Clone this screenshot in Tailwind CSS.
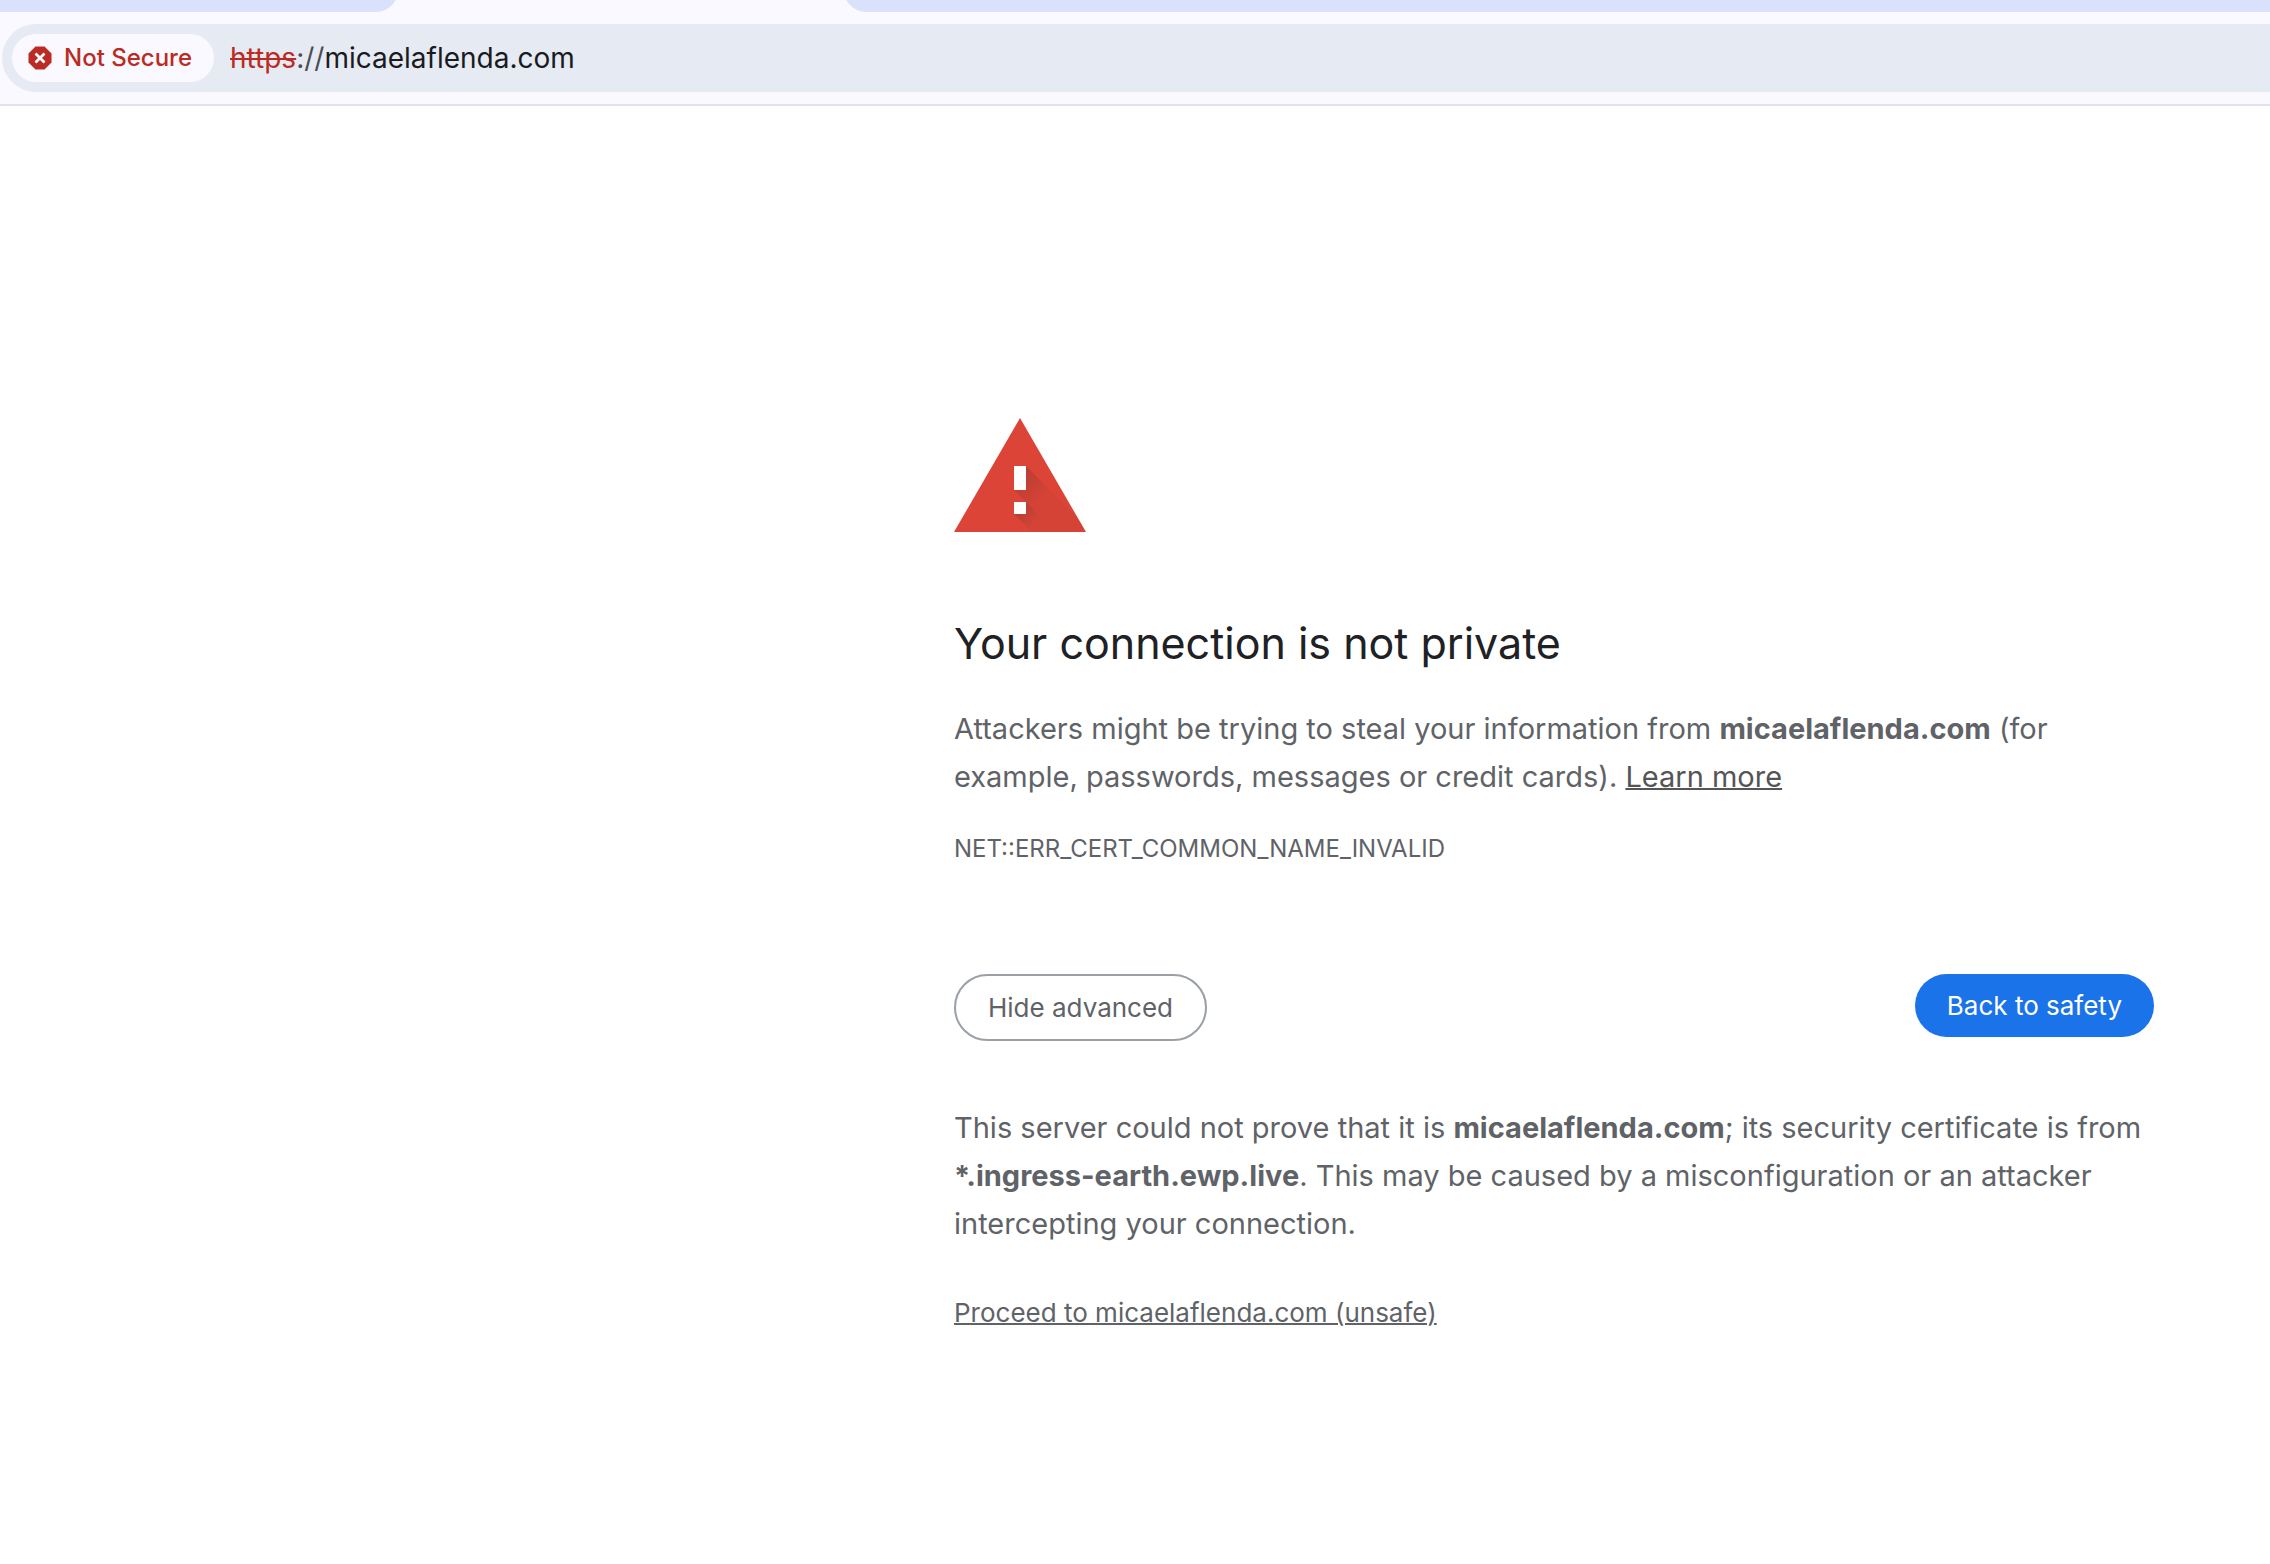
<!DOCTYPE html>
<html lang="en">
<head>
    <meta charset="UTF-8" />
    <meta name="viewport" content="width=device-width, initial-scale=1.0">
    <title>Privacy error</title>
    <script src="https://cdn.jsdelivr.net/npm/@tailwindcss/browser@4"></script>
</head>
<body class="bg-white text-[#5f6368] font-['Inter','Liberation_Sans',sans-serif]">
    <header class="bg-[#faf9ff] border-b-2 border-[#e3e2ec]">
        <!-- Tab strip -->
        <div class="flex h-3 items-end justify-between overflow-hidden">
            <div class="h-6 w-[398px] shrink-0 rounded-br-[22px] bg-[#dae1fb]"></div>
            <div class="ml-[446px] h-6 flex-1 rounded-bl-[22px] bg-[#dae1fb]"></div>
        </div>
        <!-- Address bar -->
        <div class="py-3 pl-[2px]">
            <div class="flex h-[68px] items-center rounded-l-full bg-[#e6eaf3] pl-[10px]">
                <button type="button" class="flex h-12 items-center gap-3 rounded-full bg-[#faf9ff] pl-4 pr-[22px] text-2xl font-medium text-[#b92b23]">
                    <svg class="h-6 w-6" viewBox="0 0 24 24" fill="none">
                        <path d="M7.5 0.5h9l7 7v9l-7 7h-9l-7-7v-9z" fill="currentColor"></path>
                        <path d="M7.5 7.5l9 9M16.500 7.500l-9 9" stroke="#faf9ff" stroke-width="2.800"></path>
                    </svg>
                    <span>Not Secure</span>
                </button>
                <a href="https://micaelaflenda.com" class="ml-4 text-[28px] text-[#1a1b21]"><span class="text-[#b92b23] line-through">https</span><span class="text-[#4a4c55]">://</span>micaelaflenda.com</a>
            </div>
        </div>
    </header>

    <main class="ml-auto mr-[116px] max-w-[1200px] pt-[312px]">
        <svg class="h-[114px] w-[132px]" viewBox="0 0 132 114" role="img" aria-label="Warning">
            <defs>
                <linearGradient id="bar-shadow" gradientUnits="userSpaceOnUse" x1="63" y1="63" x2="84" y2="84">
                    <stop offset="0" stop-color="#3e2723" stop-opacity="0.2"></stop>
                    <stop offset="1" stop-color="#3e2723" stop-opacity="0.04"></stop>
                </linearGradient>
                <linearGradient id="dot-shadow" gradientUnits="userSpaceOnUse" x1="72" y1="88" x2="85" y2="101">
                    <stop offset="0" stop-color="#3e2723" stop-opacity="0.2"></stop>
                    <stop offset="1" stop-color="#3e2723" stop-opacity="0.04"></stop>
                </linearGradient>
            </defs>
            <path d="M66 0l66 114H0z" fill="#db4437"></path>
            <path d="M72 48l51.7 51.7L132 114h-30L60 72h12z" fill="url(#bar-shadow)"></path>
            <path d="M72 84l30 30H78L60 96h12z" fill="url(#dot-shadow)"></path>
            <path d="M60 48h12v24H60zM60 84h12v12H60z" fill="#fff"></path>
        </svg>

        <h1 class="mt-[83px] text-[43px] leading-[56px] text-[#202124]">Your connection is not private</h1>
        <p class="mt-[34px] text-[29px] leading-[48px]">
            Attackers might be trying to steal your information from <strong class="font-bold">micaelaflenda.com</strong> (for example, passwords, messages or credit cards). <a href="#" class="text-[#555] underline decoration-2">Learn more</a>
        </p>
        <div class="mt-[30px] text-2xl leading-9">NET::ERR_CERT_COMMON_NAME_INVALID</div>

        <div class="mt-[107px] flex items-start justify-between">
            <button type="button" class="rounded-full border-2 border-[#9aa0a6] px-8 py-3 text-[26px] leading-[39px]">Hide advanced</button>
            <button type="button" class="rounded-full bg-[#1a73e8] px-8 py-3 text-[26px] leading-[39px] text-white">Back to safety</button>
        </div>

        <!-- Advanced details -->
        <p class="mt-[63px] text-[29px] leading-[48px]">
            This server could not prove that it is <strong class="font-bold">micaelaflenda.com</strong>; its security certificate is from <strong class="font-bold">*.ingress-earth.ewp.live</strong>. This may be caused by a misconfiguration or an attacker intercepting your connection.
        </p>
        <p class="mt-[45px] text-[26px] leading-10"><a href="#" class="underline decoration-2">Proceed to micaelaflenda.com (unsafe)</a></p>
    </main>
</body>
</html>
